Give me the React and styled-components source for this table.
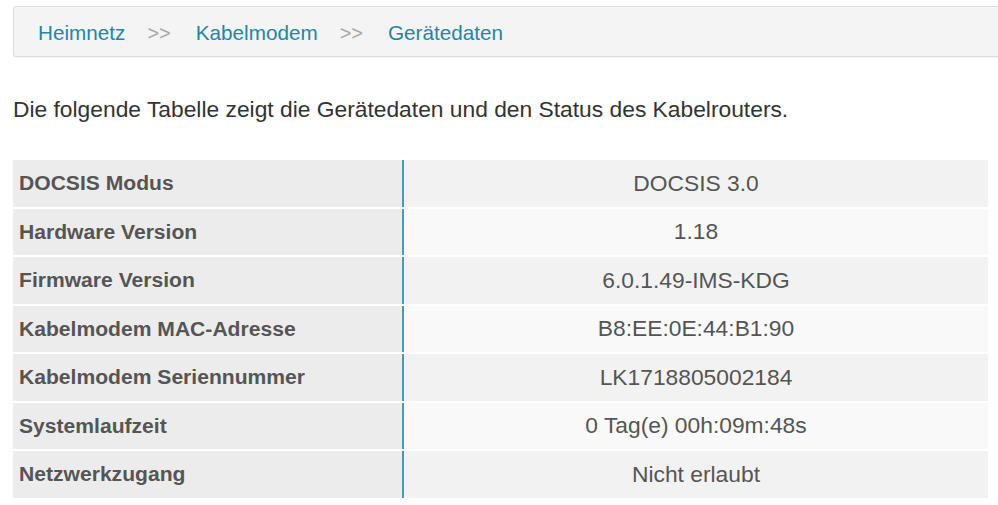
import React from "react";
import styled, { createGlobalStyle } from "styled-components";

const Global = createGlobalStyle`
  html, body { margin: 0; padding: 0; background: #fff; overflow: hidden; }
  body { font-family: "Liberation Sans", Arial, sans-serif; }
`;

const Page = styled.div`
  padding: 6px 0 0 13px;
  width: 998px;
  box-sizing: border-box;
`;

const Breadcrumb = styled.nav`
  display: flex;
  align-items: center;
  height: 51px;
  width: 1000px;
  box-sizing: border-box;
  padding: 3px 0 0 24px;
  background: #f4f4f4;
  border: 1px solid #dcdcdc;
  border-radius: 3px;
  box-shadow: 0 1px 1px rgba(0, 0, 0, 0.06);
  font-size: 20.7px;
`;

const Crumb = styled.a`
  color: #2784a6;
  text-decoration: none;
`;

const Sep = styled.span`
  color: #a8a8a8;
  font-size: 20px;
  margin: 0 25px 0 22px;
`;

const Intro = styled.p`
  margin: 37px 0 0 0;
  font-size: 22.8px;
  line-height: 30px;
  color: #333;
`;

const Table = styled.div`
  margin-top: 36px;
  width: 975px;
  display: grid;
  grid-template-columns: 389px 1fr;
  row-gap: 2px;
`;

const Label = styled.div`
  height: 46.5px;
  display: flex;
  align-items: center;
  padding-left: 6px;
  background: #ececec;
  color: #555;
  font-weight: bold;
  font-size: 21.1px;
`;

const Value = styled.div`
  height: 46.5px;
  display: flex;
  align-items: center;
  justify-content: center;
  background: ${(p) => (p.$alt ? "#f9f9f9" : "#f2f2f2")};
  border-left: 2px solid #4a98be;
  color: #555;
  font-size: 22.8px;
`;

const rows = [
  ["DOCSIS Modus", "DOCSIS 3.0"],
  ["Hardware Version", "1.18"],
  ["Firmware Version", "6.0.1.49-IMS-KDG"],
  ["Kabelmodem MAC-Adresse", "B8:EE:0E:44:B1:90"],
  ["Kabelmodem Seriennummer", "LK1718805002184"],
  ["Systemlaufzeit", "0 Tag(e) 00h:09m:48s"],
  ["Netzwerkzugang", "Nicht erlaubt"],
];

export default function App() {
  return (
    <>
      <Global />
      <Page>
        <Breadcrumb>
          <Crumb>Heimnetz</Crumb>
          <Sep>&gt;&gt;</Sep>
          <Crumb>Kabelmodem</Crumb>
          <Sep>&gt;&gt;</Sep>
          <Crumb>Gerätedaten</Crumb>
        </Breadcrumb>
        <Intro>
          Die folgende Tabelle zeigt die Gerätedaten und den Status des Kabelrouters.
        </Intro>
        <Table>
          {rows.map(([k, v], i) => (
            <React.Fragment key={k}>
              <Label>{k}</Label>
              <Value $alt={i % 2 === 1}>{v}</Value>
            </React.Fragment>
          ))}
        </Table>
      </Page>
    </>
  );
}
